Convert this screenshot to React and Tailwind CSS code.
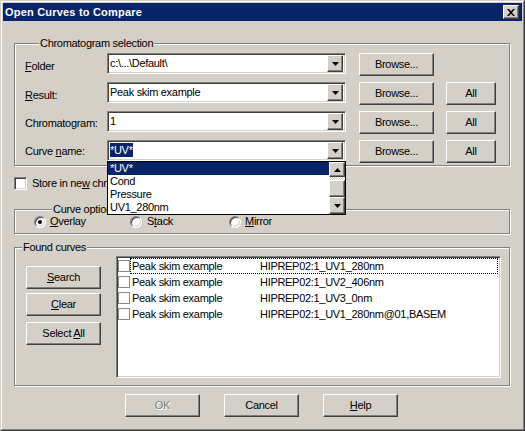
import React from "react";

const raised =
  "border border-t-white border-l-white border-r-[#404040] border-b-[#404040] shadow-[inset_-1px_-1px_0_#808080] bg-[#D4D0C8]";
const sunken =
  "border border-t-[#808080] border-l-[#808080] border-r-white border-b-white shadow-[inset_1px_1px_0_#404040,inset_-1px_-1px_0_#D4D0C8]";

const Button = ({ children, w = "w-[75px]", disabled = false, className = "" }) => (
  <div
    className={`${raised} ${w} h-[23px] flex items-center justify-center shrink-0 ${
      disabled ? "text-[#808080] [text-shadow:1px_1px_0_#fff]" : ""
    } ${className}`}
  >
    {children}
  </div>
);

const Arrow = ({ up = false }) => (
  <svg width="7" height="4" viewBox="0 0 7 4">
    {up ? (
      <path d="M3.5 0 L7 4 L0 4 Z" fill="#000" />
    ) : (
      <path d="M0 0 L7 0 L3.5 4 Z" fill="#000" />
    )}
  </svg>
);

const ArrowButton = ({ up = false, h = "h-[17px]" }) => (
  <div className={`${raised} w-[16px] ${h} flex items-center justify-center`}>
    <Arrow up={up} />
  </div>
);

const Combo = ({ children, dropdown }) => (
  <div className={`relative ${sunken} bg-white w-[239px] h-[21px] flex items-center pl-[2px] pr-[2px]`}>
    <div className="flex-1 whitespace-nowrap overflow-hidden">{children}</div>
    <ArrowButton />
    {dropdown}
  </div>
);

const Group = ({ label, labelLeft = "left-[8px]", h, children, className = "" }) => (
  <div
    className={`relative w-[496px] ${h} border border-[#808080] shadow-[inset_1px_1px_0_#fff,1px_1px_0_#fff] ${className}`}
  >
    <span className={`absolute -top-[8px] ${labelLeft} bg-[#D4D0C8] px-px leading-[14px] whitespace-nowrap`}>
      {label}
    </span>
    {children}
  </div>
);

const Radio = ({ checked }) => (
  <div className="w-[12px] h-[12px] rounded-full border border-t-[#808080] border-l-[#808080] border-r-white border-b-white bg-white shadow-[inset_1px_1px_0_#404040,inset_-1px_-1px_0_#D4D0C8] flex items-center justify-center shrink-0">
    {checked && <div className="w-[4px] h-[4px] rounded-full bg-black" />}
  </div>
);

const Row = ({ label, labelClass = "", value, all = true, dropdown }) => (
  <div className="flex items-start h-[23px]">
    <div className={`w-[82px] ${labelClass}`}>{label}</div>
    <Combo dropdown={dropdown}>{value}</Combo>
    <Button className="ml-[13px]">Browse...</Button>
    {all && (
      <Button w="w-[50px]" className="ml-[12px]">
        All
      </Button>
    )}
  </div>
);

const curves = [
  "HIPREP02:1_UV1_280nm",
  "HIPREP02:1_UV2_406nm",
  "HIPREP02:1_UV3_0nm",
  "HIPREP02:1_UV1_280nm@01,BASEM",
];

export default function App() {
  // open list of the "Curve name" combo
  const curveList = (
    <div className="absolute left-[-1px] top-[20px] w-[239px] h-[54px] border border-black bg-white flex z-10">
      <div className="flex-1 flex flex-col">
        <div className="h-[13px] leading-[13px] pl-[2px] bg-[#0A246A] text-white">*UV*</div>
        <div className="h-[13px] leading-[13px] pl-[2px]">Cond</div>
        <div className="h-[13px] leading-[13px] pl-[2px]">Pressure</div>
        <div className="h-[13px] leading-[13px] pl-[2px]">UV1_280nm</div>
      </div>
      <div className="w-[16px] flex flex-col">
        <ArrowButton up h="h-[15px]" />
        <div className="h-[3px] bg-[repeating-conic-gradient(#D4D0C8_0_25%,#fff_0_50%)] bg-[length:2px_2px]" />
        <div className={`${raised} w-[16px] h-[17px]`} />
        <ArrowButton h="h-[17px]" />
      </div>
    </div>
  );

  return (
    <div className="w-[525px] h-[431px] bg-[#D4D0C8] border border-t-[#D4D0C8] border-l-[#D4D0C8] border-r-[#404040] border-b-[#404040] font-['Liberation_Sans',Arial,sans-serif] text-[11px] tracking-[-0.3px] text-black select-none">
      <div className="h-full border border-t-white border-l-white border-r-[#808080] border-b-[#808080] p-px flex flex-col">
        {/* Title bar */}
        <div className="h-[18px] bg-[#0A246A] flex items-center justify-between pl-[2px] pr-[3px] shrink-0">
          <span className="text-white font-bold tracking-[0.2px]">Open Curves to Compare</span>
          <div className={`${raised} w-[16px] h-[14px] flex items-center justify-center`}>
            <svg width="8" height="7" viewBox="0 0 8 7">
              <path d="M0 0 H2 L4 2.2 L6 0 H8 L5 3.5 L8 7 H6 L4 4.8 L2 7 H0 L3 3.5 Z" fill="#000" />
            </svg>
          </div>
        </div>

        {/* Content */}
        <div className="flex-1 flex flex-col px-[11px] pt-[22px]">
          <Group label="Chromatogram selection" labelLeft="left-[24px]" h="h-[123px]">
            <div className="flex flex-col gap-[6px] pl-[10px] pt-[9px]">
              <Row
                label={<><u>F</u>older</>}
                labelClass="pt-[5px]"
                value="c:\...\Default\"
                all={false}
              />
              <Row
                label={<><u>R</u>esult:</>}
                labelClass="pt-[5px]"
                value="Peak skim example"
              />
              <Row label="Chromatogram:" labelClass="pt-[4px]" value="1" />
              <Row
                label={<>Curve <u>n</u>ame:</>}
                labelClass="pt-[3px]"
                value={<span className="bg-[#0A246A] text-white py-px">*UV*</span>}
                dropdown={curveList}
              />
            </div>
          </Group>

          {/* Store checkbox (its text runs under the open list) */}
          <div className="flex items-center gap-[5px] mt-[11px] h-[13px]">
            <div className={`${sunken} bg-white w-[13px] h-[13px] shrink-0`} />
            <span className="whitespace-nowrap">
              Store in ne<u>w</u> chromatogram
            </span>
          </div>

          {/* Curve options */}
          <Group label="Curve options" labelLeft="left-[37px]" h="h-[25px]" className="mt-[19px]">
            <div className="h-full flex items-center pl-[19px]">
              <div className="w-[96px] flex items-center gap-[4px]">
                <Radio checked />
                <span>
                  <u>O</u>verlay
                </span>
              </div>
              <div className="w-[99px] flex items-center gap-[5px]">
                <Radio />
                <span>
                  S<u>t</u>ack
                </span>
              </div>
              <div className="flex items-center gap-[4px]">
                <Radio />
                <span>
                  <u>M</u>irror
                </span>
              </div>
            </div>
          </Group>

          {/* Found curves */}
          <Group label="Found curves" labelLeft="left-[7px]" h="h-[139px]" className="mt-[13px]">
            <div className="flex items-start pl-[11px] pt-[8px]">
              <div className="flex flex-col mt-[10px]">
                <Button>
                  <span>
                    <u>S</u>earch
                  </span>
                </Button>
                <Button className="mt-[4px]">
                  <span>
                    <u>C</u>lear
                  </span>
                </Button>
                <Button className="mt-[6px]">
                  <span>
                    Select <u>A</u>ll
                  </span>
                </Button>
              </div>
              <div className={`${sunken} bg-white ml-[15px] w-[385px] h-[122px] pt-px pl-px pr-[2px] flex flex-col`}>
                {curves.map((c, i) => (
                  <div key={c} className="h-[16px] flex items-center">
                    <div className="w-[12px] h-[12px] border border-[#8a8a8a] bg-white shrink-0" />
                    <div
                      className={`flex-1 h-[16px] flex items-center pl-px border ${
                        i === 0 ? "border-dotted border-black" : "border-transparent"
                      }`}
                    >
                      <span className="w-[128px] whitespace-nowrap">Peak skim example</span>
                      <span className="whitespace-nowrap">{c}</span>
                    </div>
                  </div>
                ))}
              </div>
            </div>
          </Group>

          {/* Bottom buttons */}
          <div className="flex gap-[24px] ml-[111px] mt-[8px]">
            <Button disabled>OK</Button>
            <Button>Cancel</Button>
            <Button>
              <span>
                <u>H</u>elp
              </span>
            </Button>
          </div>
        </div>
      </div>
    </div>
  );
}
